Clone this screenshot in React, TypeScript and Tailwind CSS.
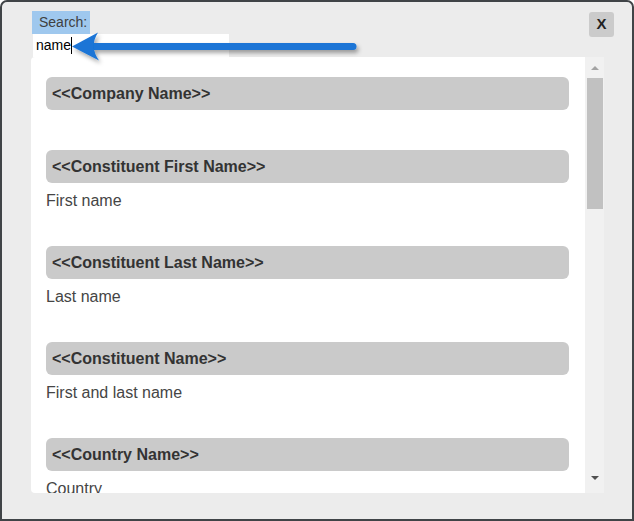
import React from "react";

// merge fields that match the search
const FIELDS = [
  { id: "company", token: "<<Company Name>>", note: "" },
  { id: "first", token: "<<Constituent First Name>>", note: "First name" },
  { id: "last", token: "<<Constituent Last Name>>", note: "Last name" },
  { id: "full", token: "<<Constituent Name>>", note: "First and last name" },
  { id: "country", token: "<<Country Name>>", note: "Country" },
];

function CalloutArrow() {
  return (
    <svg
      className="absolute -left-[2px] -top-[2px] pointer-events-none"
      width="380"
      height="80"
      viewBox="0 0 380 80"
    >
      <defs>
        <filter id="arrowShadow" x="-10%" y="-50%" width="120%" height="200%">
          <feDropShadow dx="2" dy="3" stdDeviation="2" floodColor="#000" floodOpacity="0.35" />
        </filter>
      </defs>
      <g filter="url(#arrowShadow)" fill="#1a74d6">
        <line x1="90" y1="46.5" x2="353" y2="46.5" stroke="#1a74d6" strokeWidth="7" strokeLinecap="round" />
        <path d="M72 46.5 L98 32.5 Q89 46.5 99 60.5 Z" />
      </g>
    </svg>
  );
}

export default function App() {
  return (
    <div
      className="relative w-[634px] h-[521px] bg-[#ececec] border-2 border-[#404447] rounded-t-[7px] pl-[29px] pr-[18px] pt-[9px]"
      style={{ fontFamily: '"Liberation Sans", Arial, sans-serif' }}
    >
      {/* header: search + close */}
      <div className="flex justify-between">
        <div className="flex flex-col items-start">
          <div className="ml-[1px] h-[23px] w-[58px] bg-[#9fc8ee] pl-[7px] text-[14px] leading-[23px] text-[#404040]">
            Search:
          </div>
          <div className="ml-[2px] flex h-[23px] w-[196px] items-center bg-white pl-[3px] text-[14px] text-black">
            <span>name</span>
            <span className="inline-block h-[17px] w-[1px] bg-black" />
          </div>
        </div>
        <button className="mt-[1px] flex h-[25px] w-[25px] items-center justify-center rounded-[3px] bg-[#cbcbcb] text-[15px] font-bold text-[#222]">
          X
        </button>
      </div>

      {/* result list */}
      <div className="flex h-[436px] w-[573px]">
        <div className="flex-1 overflow-hidden rounded-l-[4px] bg-white pl-[15px] pr-[16px] pt-[20px]">
          {FIELDS.map((f) => (
            <div key={f.id} className="mb-[34px]">
              <div className="h-[33px] rounded-[6px] bg-[#cacaca] pl-[6px] text-[16px] font-bold leading-[33px] text-[#333]">
                {f.token}
              </div>
              <div className="pt-[6px]">
                {f.note && (
                  <div className="text-[16px] leading-[23px] text-[#454545]">{f.note}</div>
                )}
              </div>
            </div>
          ))}
        </div>

        {/* scrollbar */}
        <div className="flex w-[19px] flex-col items-center bg-[#f1f1f1]">
          <div className="flex h-[21px] items-center justify-center">
            <div className="h-0 w-0 border-x-[4px] border-b-[4px] border-x-transparent border-b-[#a3a3a3]" />
          </div>
          <div className="ml-[1px] h-[131px] w-[16px] bg-[#c1c1c1]" />
          <div className="flex-1" />
          <div className="mb-[9px] flex h-[12px] items-center justify-center">
            <div className="h-0 w-0 border-x-[4px] border-t-[4px] border-x-transparent border-t-[#505050]" />
          </div>
        </div>
      </div>

      <CalloutArrow />
    </div>
  );
}
